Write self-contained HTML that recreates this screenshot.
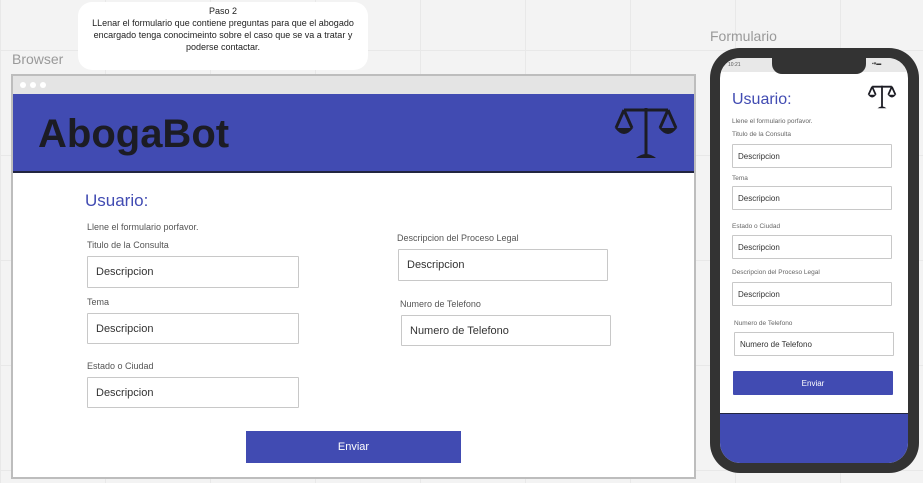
<!DOCTYPE html>
<html><head><meta charset="utf-8"><style>
*{margin:0;padding:0;box-sizing:border-box}
body{width:923px;height:483px;overflow:hidden;position:relative;font-family:"Liberation Sans",Arial,sans-serif;
background-color:#f3f3f3;background-image:linear-gradient(#e8e8e8 1px,transparent 1px),linear-gradient(90deg,#e8e8e8 1px,transparent 1px);background-size:105px 105px;background-position:0 50px}
.a{position:absolute}
.lbl{position:absolute;font-size:9px;color:#555}
.inp{position:absolute;border:1px solid #c8c8c8;background:#fff;font-size:11px;color:#333;padding-left:8px;display:flex;align-items:center;border-radius:1px}
.p .lbl{font-size:6.5px;color:#666}
.p .inp{font-size:8px;padding-left:5px}
</style></head><body>
<div class="a" style="left:78px;top:2px;width:290px;height:68px;background:#fff;border-radius:14px;text-align:center;font-size:9px;line-height:12px;color:#222;padding-top:3px">Paso 2<br>LLenar el formulario que contiene preguntas para que el abogado encargado tenga conocimeinto sobre el caso que se va a tratar y poderse contactar.</div>
<div class="a" style="left:12px;top:51px;font-size:14px;color:#999">Browser</div>
<div class="a" style="left:710px;top:28px;font-size:14px;color:#999">Formulario</div>

<div class="a" style="left:11px;top:74px;width:685px;height:405px;border:2px solid #bdbdbd;background:#fff">
 <div class="a" style="left:0;top:0;width:681px;height:18px;background:#e4e4e4"></div>
 <div class="a" style="left:7px;top:6px;width:6px;height:6px;border-radius:50%;background:#fff"></div>
 <div class="a" style="left:17px;top:6px;width:6px;height:6px;border-radius:50%;background:#fff"></div>
 <div class="a" style="left:27px;top:6px;width:6px;height:6px;border-radius:50%;background:#fff"></div>
 <div class="a" style="left:0;top:18px;width:681px;height:79px;background:#414bb2;border-bottom:2px solid #222540"></div>
 <div class="a" style="left:25px;top:36px;font-size:40px;font-weight:bold;color:#1c1c24;font-family:'Liberation Sans',sans-serif">AbogaBot</div>
 <svg class="a" style="left:601px;top:28px" width="64" height="58" viewBox="0 0 64 58"><g fill="none" stroke="#1c1c24" stroke-width="3"><line x1="32" y1="4" x2="32" y2="52"/><line x1="10" y1="6" x2="54" y2="6"/><path d="M10 6 L2 24 M10 6 L18 24 M54 6 L46 24 M54 6 L62 24"/></g><path d="M1 24 H19 Q10 36 1 24Z M45 24 H63 Q54 36 45 24Z M22 54 Q32 46 42 54Z" fill="#1c1c24"/></svg>
 <div class="a" style="left:72px;top:115px;font-size:17px;color:#414bb2">Usuario:</div>
 <div class="lbl" style="left:74px;top:146px">Llene el formulario porfavor.</div>
 <div class="lbl" style="left:74px;top:164px">Titulo de la Consulta</div>
 <div class="inp" style="left:74px;top:180px;width:212px;height:32px">Descripcion</div>
 <div class="lbl" style="left:74px;top:221px">Tema</div>
 <div class="inp" style="left:74px;top:237px;width:212px;height:31px">Descripcion</div>
 <div class="lbl" style="left:74px;top:285px">Estado o Ciudad</div>
 <div class="inp" style="left:74px;top:301px;width:212px;height:31px">Descripcion</div>
 <div class="lbl" style="left:384px;top:157px">Descripcion del Proceso Legal</div>
 <div class="inp" style="left:385px;top:173px;width:210px;height:32px">Descripcion</div>
 <div class="lbl" style="left:387px;top:223px">Numero de Telefono</div>
 <div class="inp" style="left:388px;top:239px;width:210px;height:31px">Numero de Telefono</div>
 <div class="a" style="left:233px;top:355px;width:215px;height:32px;background:#414bb2;color:#fff;font-size:11px;display:flex;align-items:center;justify-content:center">Enviar</div>
</div>

<div class="a p" style="left:710px;top:48px;width:209px;height:425px;background:#333;border-radius:30px">
 <div class="a" style="left:10px;top:10px;width:188px;height:405px;background:#fff;border-radius:20px;overflow:hidden">
  <div class="a" style="left:0;top:0;width:188px;height:14px;background:#e8e8e8"></div>
  <div class="a" style="left:8px;top:4px;font-size:5px;color:#555">10:21</div>
  <div class="a" style="left:152px;top:3px;font-size:5px;color:#333">▪▾▬</div>
  <div class="a" style="left:52px;top:-2px;width:94px;height:18px;background:#333;border-radius:0 0 10px 10px"></div>
  <div class="a" style="left:12px;top:33px;font-size:16px;color:#414bb2">Usuario:</div>
  <svg class="a" style="left:147px;top:26px" width="30" height="26" viewBox="0 0 64 58"><g fill="none" stroke="#1c1c24" stroke-width="4"><line x1="32" y1="4" x2="32" y2="52"/><line x1="10" y1="6" x2="54" y2="6"/><path d="M10 6 L2 24 M10 6 L18 24 M54 6 L46 24 M54 6 L62 24"/></g><path d="M1 24 H19 Q10 36 1 24Z M45 24 H63 Q54 36 45 24Z M22 54 Q32 46 42 54Z" fill="#1c1c24"/></svg>
  <div class="lbl" style="left:12px;top:60px">Llene el formulario porfavor.</div>
  <div class="lbl" style="left:12px;top:73px">Titulo de la Consulta</div>
  <div class="inp" style="left:12px;top:86px;width:160px;height:24px">Descripcion</div>
  <div class="lbl" style="left:12px;top:117px">Tema</div>
  <div class="inp" style="left:12px;top:128px;width:160px;height:24px">Descripcion</div>
  <div class="lbl" style="left:12px;top:165px">Estado o Ciudad</div>
  <div class="inp" style="left:12px;top:177px;width:160px;height:24px">Descripcion</div>
  <div class="lbl" style="left:12px;top:211px">Descripcion del Proceso Legal</div>
  <div class="inp" style="left:12px;top:224px;width:160px;height:24px">Descripcion</div>
  <div class="lbl" style="left:14px;top:262px">Numero de Telefono</div>
  <div class="inp" style="left:14px;top:274px;width:160px;height:24px">Numero de Telefono</div>
  <div class="a" style="left:13px;top:313px;width:160px;height:24px;background:#414bb2;color:#fff;font-size:8px;display:flex;align-items:center;justify-content:center;border-radius:1px">Enviar</div>
  <div class="a" style="left:0;top:355px;width:188px;height:50px;background:#414bb2;border-top:1px solid #222540"></div>
 </div>
</div>
</body></html>
